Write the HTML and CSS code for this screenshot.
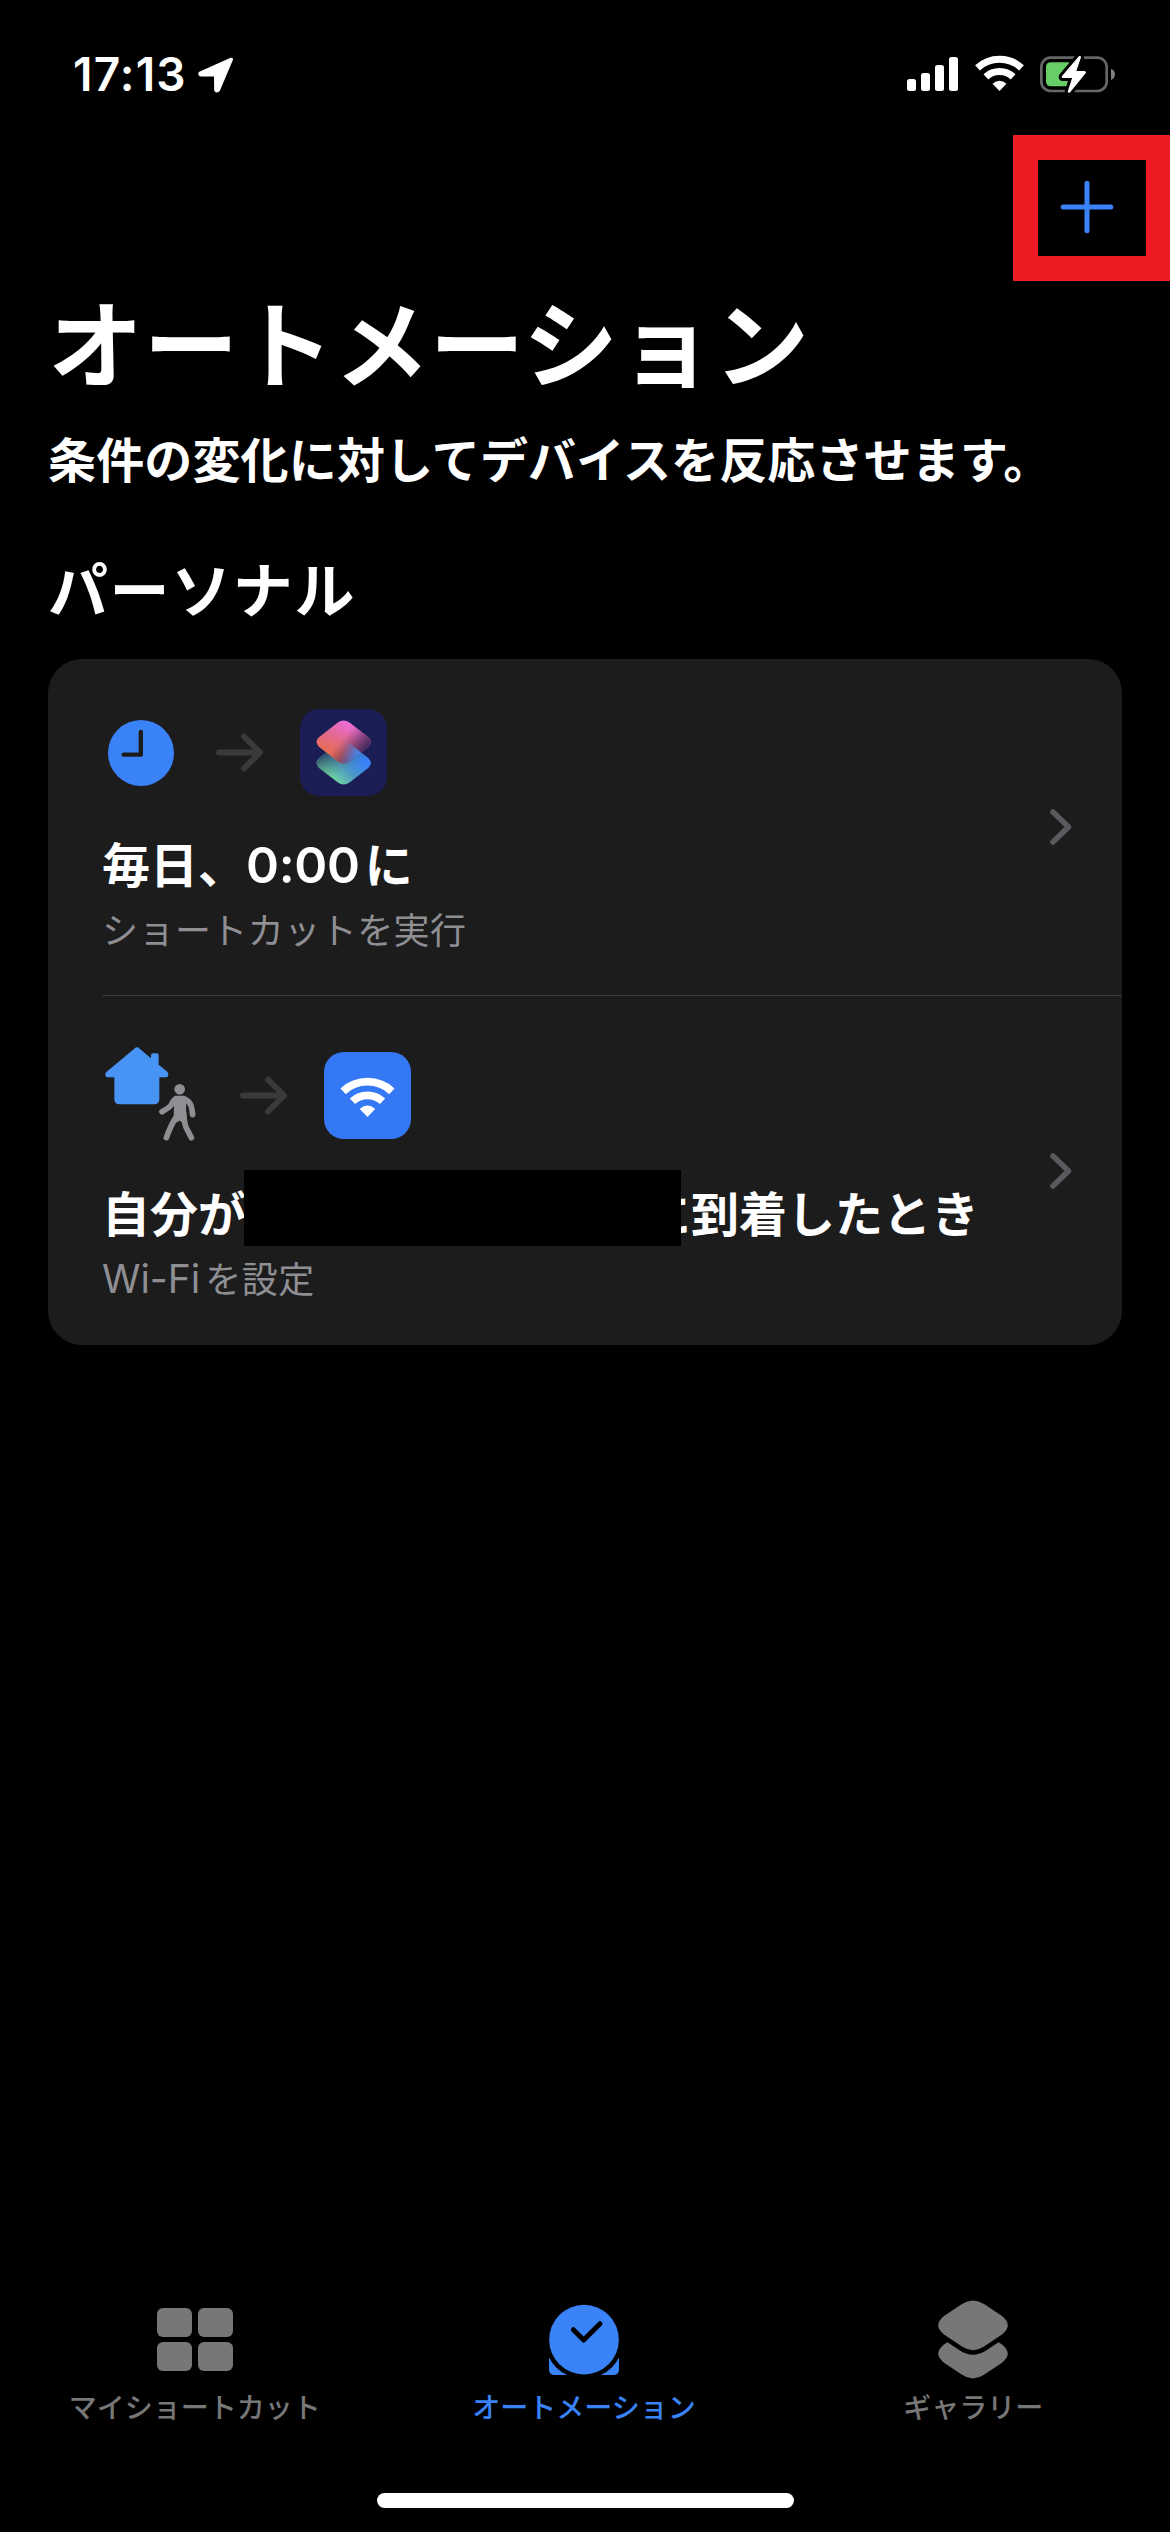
FILE: index.html
```html
<!DOCTYPE html>
<html lang="ja">
<head>
<meta charset="utf-8">
<title>オートメーション</title>
<link rel="stylesheet" href="styles.css">
</head>
<body>
<svg class="defs" width="0" height="0" aria-hidden="true">
  <defs>
    <symbol id="wifi" viewBox="-24.5 -36.5 49 37">
      <path d="M-22 -23.6A32.3 32.3 0 0 1 22 -23.6M-13.6 -14.6A20 20 0 0 1 13.6 -14.6" fill="none" stroke="#fff" stroke-width="7"/>
      <path d="M0 -.5L-7 -7.7Q0 -14 7 -7.7Z" fill="#fff"/>
    </symbol>
    <symbol id="arrow" viewBox="0 0 47 39">
      <path d="M3 19.5H43M28 3.5L44 19.5L28 35.5" fill="none" stroke="#3a3a3c" stroke-width="6" stroke-linecap="round" stroke-linejoin="round"/>
    </symbol>
    <symbol id="chevron" viewBox="0 0 22 38">
      <path d="M3 4L18.500 19L3 34" fill="none" stroke="#5a5a5e" stroke-width="5.500" stroke-linecap="round" stroke-linejoin="round"/>
    </symbol>
  </defs>
</svg>
<div class="screen">
  <header class="status">
    <div class="status-time">
      <span class="time">17:13</span>
      <svg width="38" height="38" viewBox="471 79 114 114"><path d="M574 89L480 131Q479 135 484 135.500L527 135.500L527.500 181Q531 186 535 181Z" fill="#fff" stroke="#fff" stroke-width="10" stroke-linejoin="round"/></svg>
    </div>
    <div class="status-icons">
      <svg width="51" height="34" viewBox="0 0 51 34" fill="#fff"><rect y="22" width="9" height="12" rx="2.500"/><rect x="14" y="16" width="9" height="18" rx="2.500"/><rect x="28" y="8" width="9" height="26" rx="2.500"/><rect x="42" width="9" height="34" rx="2.500"/></svg>
      <svg class="status-wifi" width="49" height="37"><use href="#wifi"/></svg>
      <svg class="battery" width="76" height="39" viewBox="480 74 228 117">
        <rect x="484" y="82" width="196" height="100" rx="28" fill="none" stroke="#666" stroke-width="8"/>
        <path d="M693 115Q705 120 705 132Q705 144 693 149Z" fill="#808080"/>
        <path d="M513 96H567V168H513Q498 168 498 153V111Q498 96 513 96Z" fill="#67ce67"/>
        <path d="M598 79L547 139Q547 141 549 141H579L565 184Q567 187 570 183L616 127Q616 124 613 124H586L601 81Q600 78 598 79Z" fill="#fff" stroke="#000" stroke-width="22" stroke-linejoin="round"/>
        <path d="M598 79L547 139Q547 141 549 141H579L565 184Q567 187 570 183L616 127Q616 124 613 124H586L601 81Q600 78 598 79Z" fill="#fff" stroke="#fff" stroke-width="4" stroke-linejoin="round"/>
      </svg>
    </div>
  </header>

  <nav class="toolbar">
    <button class="add" aria-label="追加"><svg width="54" height="54" viewBox="0 0 54 54"><path d="M27 3.200V50.800M3.200 27H50.800" stroke="#3a82f7" stroke-width="5" stroke-linecap="round"/></svg></button>
  </nav>

  <main class="content">
    <h1>オートメーション</h1>
    <p class="lead">条件の変化に対してデバイスを反応させます。</p>
    <h2>パーソナル</h2>

    <section class="card">
      <article class="row row-time">
        <div class="row-body">
          <div class="flow">
            <svg class="clock" width="66" height="66" viewBox="204 210 198 198"><circle cx="303" cy="309" r="99" fill="#3a82f7"/><path d="M302.500 246V314H251" fill="none" stroke="#1c1c1c" stroke-width="13" stroke-linecap="round" stroke-linejoin="round"/></svg>
            <svg class="arrow" width="47" height="39"><use href="#arrow"/></svg>
            <svg width="87" height="87" viewBox="0 0 87 87">
              <defs>
                <linearGradient id="green" gradientUnits="userSpaceOnUse" x1="-8" y1="19" x2="17" y2="-3"><stop offset="0" stop-color="#6fd3a0"/><stop offset=".55" stop-color="#4a96c8"/><stop offset="1" stop-color="#3a82f6"/></linearGradient>
                <linearGradient id="teal" gradientUnits="userSpaceOnUse" x1="-18" y1="-12" x2="-5" y2="12"><stop offset="0" stop-color="#2c3f66"/><stop offset="1" stop-color="#3c8080" stop-opacity="0"/></linearGradient>
                <linearGradient id="pink" gradientUnits="userSpaceOnUse" x1="3" y1="-20" x2="-10" y2="11"><stop offset="0" stop-color="#ec6bd8"/><stop offset=".55" stop-color="#e26a8c"/><stop offset="1" stop-color="#e96c58"/></linearGradient>
                <linearGradient id="plum" gradientUnits="userSpaceOnUse" x1="5" y1="-10" x2="22" y2="5"><stop offset="0" stop-color="#4c2c63" stop-opacity="0"/><stop offset="1" stop-color="#4a2b60"/></linearGradient>
                <linearGradient id="blue" gradientUnits="userSpaceOnUse" x1="-2" y1="9" x2="13" y2="14"><stop offset="0" stop-color="#7a86c8" stop-opacity="0"/><stop offset="1" stop-color="#4a85e8"/></linearGradient>
                <path id="tile" d="M-6.200 -19.200Q0 -24 6.200 -19.200L24.800 -4.800Q29.500 0 24.800 4.800L6.200 19.200Q0 24 -6.200 19.200L-24.800 4.800Q-29.500 0 -24.800 -4.800Z"/>
                <clipPath id="lower"><use href="#tile" x="43.700" y="54"/></clipPath>
              </defs>
              <rect width="87" height="87" rx="19" fill="#1b1e54"/>
              <use href="#tile" x="43.700" y="54" fill="url(#green)"/>
              <use href="#tile" x="43.700" y="54" fill="url(#teal)"/>
              <use href="#tile" x="43.700" y="33" fill="url(#pink)"/>
              <use href="#tile" x="43.700" y="33" fill="url(#plum)"/>
              <g clip-path="url(#lower)"><use href="#tile" x="43.700" y="33" fill="url(#blue)"/></g>
            </svg>
          </div>
          <h3>毎日、<span class="latin zero">0:00</span>に</h3>
          <p>ショートカットを実行</p>
        </div>
        <svg class="chevron" width="22" height="38"><use href="#chevron"/></svg>
      </article>

      <article class="row row-place">
        <div class="row-body">
          <div class="flow">
            <svg class="home" width="91" height="94" viewBox="194 200 273 282">
              <path fill="#4894f4" d="M282 205Q290 197 298 205L332 234V225Q332 219 338 219H349Q355 219 355 225V253L381 274Q384 277 384 283Q383 291 375 291H357V356Q357 372 341 372H238Q222 372 222 356V291H204Q196 291 195 283Q195 277 199 274Z"/>
              <g fill="none" stroke="#8e8e93" stroke-width="17" stroke-linecap="round" stroke-linejoin="round">
                <path d="M406 355Q398 362 391 376Q388 381 365 394M430 355Q447 362 452 376Q455 385 457 403M408 410Q393 431 378 472M430 400Q432 430 438 443L453 472"/>
              </g>
              <circle cx="418" cy="327" r="16" fill="#8e8e93"/>
              <path fill="#8e8e93" d="M406 346.500H430Q438 347 440 356L437 380L439 426H424Q418 416 410 427L400 412L401 376L398 355Z"/>
            </svg>
            <svg class="arrow" width="47" height="39"><use href="#arrow"/></svg>
            <div class="wifi-tile"><svg width="55" height="41"><use href="#wifi"/></svg></div>
          </div>
          <h3 class="masked"><span class="who">自分が</span><span class="mask"></span><span>に到着したとき</span></h3>
          <p><span class="latin wifi-word">Wi-Fi</span>を設定</p>
        </div>
        <svg class="chevron" width="22" height="38"><use href="#chevron"/></svg>
      </article>
    </section>
  </main>

  <footer class="tabs">
    <div class="tab">
      <svg width="76" height="80" viewBox="0 0 76 80" fill="#777"><rect y="8" width="35" height="29" rx="6"/><rect x="41" y="8" width="35" height="29" rx="6"/><rect y="42" width="35" height="29" rx="6"/><rect x="41" y="42" width="35" height="29" rx="6"/></svg>
      <span>マイショートカット</span>
    </div>
    <div class="tab active">
      <svg width="70" height="80" viewBox="327 60 210 240"><rect x="327" y="215" width="210" height="70" rx="16" fill="#3a82f7"/><circle cx="432" cy="179" r="118"/><circle cx="432" cy="179" r="104.500" fill="#3a82f7"/><path d="M400 149L431 180L480 131" fill="none" stroke="#000" stroke-width="15" stroke-linecap="round" stroke-linejoin="round"/></svg>
      <span>オートメーション</span>
    </div>
    <div class="tab">
      <svg width="70" height="80" viewBox="-35 -25.300 70 80">
        <defs><path id="slab" d="M-11 -21.200Q0 -28.500 11 -21.200L29 -9.200Q40.500 0 29 9.200L11 21.200Q0 28.500 -11 21.200L-29 9.200Q-40.500 0 -29 -9.200Z"/></defs>
        <use href="#slab" y="28.300" fill="#777"/><use href="#slab" stroke="#000" stroke-width="9"/><use href="#slab" fill="#777"/>
      </svg>
      <span>ギャラリー</span>
    </div>
  </footer>
  <div class="home-bar"></div>
</div>
</body>
</html>
```
FILE: styles.css
```css
* { box-sizing: border-box; margin: 0; padding: 0; }

body {
  background: #000;
  color: #fff;
  font-family: "Noto Sans CJK JP", sans-serif;
}

svg { display: block; flex: none; }
.defs { position: absolute; }

.screen {
  width: 1170px;
  height: 2532px;
  display: flex;
  flex-direction: column;
  background: #000;
  overflow: hidden;
}

.status {
  height: 135px;
  padding: 55px 54px 0 73px;
  display: flex;
  justify-content: space-between;
  align-items: flex-start;
}
.status-time { display: flex; gap: 12px; }
.status-time svg { margin-top: 1px; }
.time {
  width: 112px;
  font: 600 46px/38px Inter, sans-serif;
  letter-spacing: 1.2px;
  white-space: nowrap;
}
.status-icons { display: flex; align-items: flex-start; }
.status-icons svg:first-child { margin-top: 2px; }
.status-wifi { margin-left: 16.500px; }
.battery { margin-left: 16.500px; }

.toolbar { height: 146px; display: flex; justify-content: flex-end; }
.add {
  width: 158px;
  height: 146px;
  margin-right: -1px;
  border: 25px solid #ed1c24;
  background: #000;
  display: flex;
  align-items: center;
  padding: 0 0 2px 22px;
}

.content { padding: 9px 48px 0; }
h1 { font-size: 95px; font-weight: 700; line-height: 100px; letter-spacing: .4px; white-space: nowrap; }
.lead { margin-top: 37px; font-size: 48px; font-weight: 700; line-height: 60px; letter-spacing: .15px; white-space: nowrap; }
h2 { margin-top: 60px; font-size: 60px; font-weight: 700; line-height: 80px; letter-spacing: 1.6px; }

.card {
  margin-top: 32px;
  height: 686px;
  border-radius: 34px;
  background: #1c1c1c;
}
.row {
  margin-left: 54px;
  padding-right: 50px;
  display: flex;
  justify-content: space-between;
  align-items: center;
}
.row-time { height: 337px; border-bottom: 1px solid #3a3a3c; }
.row-place { height: 349px; }
.row-body { align-self: flex-start; }
.flow { display: flex; align-items: center; }
.row-time .flow { height: 87px; margin-top: 50px; padding-left: 6px; }
.row-place .flow { height: 94px; margin-top: 51px; padding-left: 3px; }
.clock { margin-top: 1px; }
.arrow { margin: 0 37px 0 42px; }
.row-place .arrow { margin: 2px 37px 0 44px; }
.wifi-tile {
  width: 87px;
  height: 87px;
  margin-top: 3px;
  border-radius: 20px;
  background: #3478f6;
  display: grid;
  place-items: center;
  padding-top: 4px;
}

.row h3 { height: 60px; margin-top: 36px; font-size: 48px; font-weight: 700; line-height: 60px; white-space: nowrap; }
.row p { height: 50px; margin-top: 11px; font-size: 36px; line-height: 50px; letter-spacing: .45px; color: #8e8e93; white-space: nowrap; }
.row .masked { margin-top: 40px; }
.latin { font-family: Inter, sans-serif; font-size: 50px; font-weight: 600; line-height: 1; letter-spacing: -.3px; }
.zero { margin-right: 5px; }
.wifi-word { font-size: 39px; font-weight: 400; margin-right: 5px; letter-spacing: 0; }

.masked { display: flex; }
.masked .who { width: 142px; }
.mask { width: 437px; height: 76px; margin: -11px -38px 0 0; background: #000; position: relative; z-index: 1; }

.tabs {
  margin-top: auto;
  display: grid;
  grid-template-columns: repeat(3, 1fr);
  padding-right: 2px;
}
.tab { display: flex; flex-direction: column; align-items: center; color: #777; }
.tab span { margin-top: 5px; font-size: 28px; font-weight: 500; line-height: 42px; white-space: nowrap; }
.tab.active { color: #3a82f7; }

.home-bar { width: 417px; height: 15px; margin: 66px auto 24px; border-radius: 8px; background: #fff; }
```
